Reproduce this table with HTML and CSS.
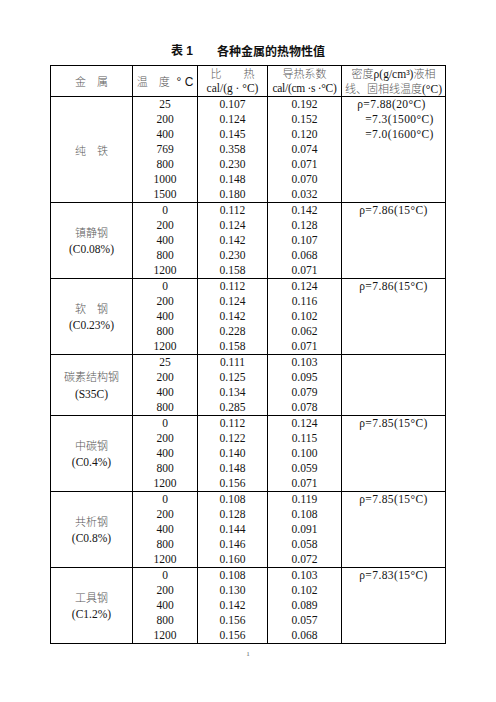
FILE: index.html
```html
<!DOCTYPE html>
<html lang="zh">
<head>
<meta charset="utf-8">
<title>表1 各种金属的热物性值</title>
<link rel="stylesheet" href="styles.css">
</head>
<body>
<div class="page">
  <h1 class="title"><span class="tno">表 1</span><span class="tname">各种金属的热物性值</span></h1>
  <table class="props">
    <colgroup>
      <col class="c1"><col class="c2"><col class="c3"><col class="c4"><col class="c5">
    </colgroup>
    <thead>
      <tr>
        <th><span class="zh">金　属</span></th>
        <th><span class="zh">温　度</span> <span class="deg">°&nbsp;C</span></th>
        <th><div class="l"><span class="zh">比　　热</span></div><div class="l">cal/(g · °C)</div></th>
        <th><div class="l"><span class="zh">导热系数</span></div><div class="l tight">cal/(cm ·s ·°C)</div></th>
        <th><div class="l"><span class="zh">密度</span>ρ(g/cm³)<span class="zh">液相</span></div><div class="l"><span class="zh">线、固相线温度</span>(°C)</div></th>
      </tr>
    </thead>
    <tbody>
      <tr>
        <td class="name"><span class="zh">纯　铁</span></td>
        <td><div class="l">25</div><div class="l">200</div><div class="l">400</div><div class="l">769</div><div class="l">800</div><div class="l">1000</div><div class="l">1500</div></td>
        <td><div class="l">0.107</div><div class="l">0.124</div><div class="l">0.145</div><div class="l">0.358</div><div class="l">0.230</div><div class="l">0.148</div><div class="l">0.180</div></td>
        <td><div class="l">0.192</div><div class="l">0.152</div><div class="l">0.120</div><div class="l">0.074</div><div class="l">0.071</div><div class="l">0.070</div><div class="l">0.032</div></td>
        <td class="dens"><div class="l first">ρ=7.88(20°C)</div><div class="l sub">=7.3(1500°C)</div><div class="l sub">=7.0(1600°C)</div></td>
      </tr>
      <tr>
        <td class="name"><div class="n"><span class="zh">镇静钢</span></div><div class="n">(C0.08%)</div></td>
        <td><div class="l">0</div><div class="l">200</div><div class="l">400</div><div class="l">800</div><div class="l">1200</div></td>
        <td><div class="l">0.112</div><div class="l">0.124</div><div class="l">0.142</div><div class="l">0.230</div><div class="l">0.158</div></td>
        <td><div class="l">0.142</div><div class="l">0.128</div><div class="l">0.107</div><div class="l">0.068</div><div class="l">0.071</div></td>
        <td class="dens"><div class="l">ρ=7.86(15°C)</div></td>
      </tr>
      <tr>
        <td class="name"><div class="n"><span class="zh">软　钢</span></div><div class="n">(C0.23%)</div></td>
        <td><div class="l">0</div><div class="l">200</div><div class="l">400</div><div class="l">800</div><div class="l">1200</div></td>
        <td><div class="l">0.112</div><div class="l">0.124</div><div class="l">0.142</div><div class="l">0.228</div><div class="l">0.158</div></td>
        <td><div class="l">0.124</div><div class="l">0.116</div><div class="l">0.102</div><div class="l">0.062</div><div class="l">0.071</div></td>
        <td class="dens"><div class="l">ρ=7.86(15°C)</div></td>
      </tr>
      <tr>
        <td class="name"><div class="n"><span class="zh">碳素结构钢</span></div><div class="n">(S35C)</div></td>
        <td><div class="l">25</div><div class="l">200</div><div class="l">400</div><div class="l">800</div></td>
        <td><div class="l">0.111</div><div class="l">0.125</div><div class="l">0.134</div><div class="l">0.285</div></td>
        <td><div class="l">0.103</div><div class="l">0.095</div><div class="l">0.079</div><div class="l">0.078</div></td>
        <td class="dens"></td>
      </tr>
      <tr>
        <td class="name"><div class="n"><span class="zh">中碳钢</span></div><div class="n">(C0.4%)</div></td>
        <td><div class="l">0</div><div class="l">200</div><div class="l">400</div><div class="l">800</div><div class="l">1200</div></td>
        <td><div class="l">0.112</div><div class="l">0.122</div><div class="l">0.140</div><div class="l">0.148</div><div class="l">0.156</div></td>
        <td><div class="l">0.124</div><div class="l">0.115</div><div class="l">0.100</div><div class="l">0.059</div><div class="l">0.071</div></td>
        <td class="dens"><div class="l">ρ=7.85(15°C)</div></td>
      </tr>
      <tr>
        <td class="name"><div class="n"><span class="zh">共析钢</span></div><div class="n">(C0.8%)</div></td>
        <td><div class="l">0</div><div class="l">200</div><div class="l">400</div><div class="l">800</div><div class="l">1200</div></td>
        <td><div class="l">0.108</div><div class="l">0.128</div><div class="l">0.144</div><div class="l">0.146</div><div class="l">0.160</div></td>
        <td><div class="l">0.119</div><div class="l">0.108</div><div class="l">0.091</div><div class="l">0.058</div><div class="l">0.072</div></td>
        <td class="dens"><div class="l">ρ=7.85(15°C)</div></td>
      </tr>
      <tr>
        <td class="name"><div class="n"><span class="zh">工具钢</span></div><div class="n">(C1.2%)</div></td>
        <td><div class="l">0</div><div class="l">200</div><div class="l">400</div><div class="l">800</div><div class="l">1200</div></td>
        <td><div class="l">0.108</div><div class="l">0.130</div><div class="l">0.142</div><div class="l">0.156</div><div class="l">0.156</div></td>
        <td><div class="l">0.103</div><div class="l">0.102</div><div class="l">0.089</div><div class="l">0.057</div><div class="l">0.068</div></td>
        <td class="dens"><div class="l">ρ=7.83(15°C)</div></td>
      </tr>
    </tbody>
  </table>
  <div class="pageno">1</div>
</div>
</body>
</html>
```
FILE: styles.css
```css
html, body {
  margin: 0;
  padding: 0;
  background: #fff;
}
body {
  font-family: "Liberation Serif", "Noto Sans CJK SC", serif;
  color: #141414;
  font-size: 11.5px;
}
.page {
  width: 496px;
  height: 702px;
  display: flex;
  flex-direction: column;
  align-items: center;
}
.title {
  margin: 43px 0 6px;
  height: 16px;
  line-height: 16px;
  font-size: 12px;
  font-weight: bold;
  font-family: "Noto Sans CJK SC", "Liberation Sans", sans-serif;
  color: #111;
  display: flex;
  gap: 24px;
}
.title .tno {
  font-family: "Liberation Sans", "Noto Sans CJK SC", sans-serif;
}
.props {
  border-collapse: collapse;
  table-layout: fixed;
  width: 395px;
  border: 1px solid #000;
}
.c1 { width: 82px; }
.c2 { width: 65px; }
.c3 { width: 70px; }
.c4 { width: 74px; }
.c5 { width: 104px; }
.props th, .props td {
  border: 1px solid #000;
  padding: 0;
  text-align: center;
  vertical-align: top;
  font-weight: normal;
  white-space: nowrap;
}
.props th {
  height: 30px;
  vertical-align: middle;
}
.zh {
  font-family: "Noto Sans CJK SC", sans-serif;
  font-weight: 300;
  color: #5a5a5a;
  font-size: 11px;
}
.deg {
  font-family: "Liberation Sans", sans-serif;
  font-size: 12px;
  margin-left: 4px;
}
.l {
  height: 15px;
  line-height: 15px;
}
.tight {
  letter-spacing: -0.3px;
}
.props td.name {
  vertical-align: middle;
}
.n {
  line-height: 16.5px;
}
.dens .l {
  letter-spacing: 0.4px;
}
.dens .first {
  padding-right: 4px;
}
.dens .sub {
  padding-left: 12px;
}
.pageno {
  margin-top: 6px;
  font-size: 7px;
  line-height: 8px;
  color: #666;
}
```
